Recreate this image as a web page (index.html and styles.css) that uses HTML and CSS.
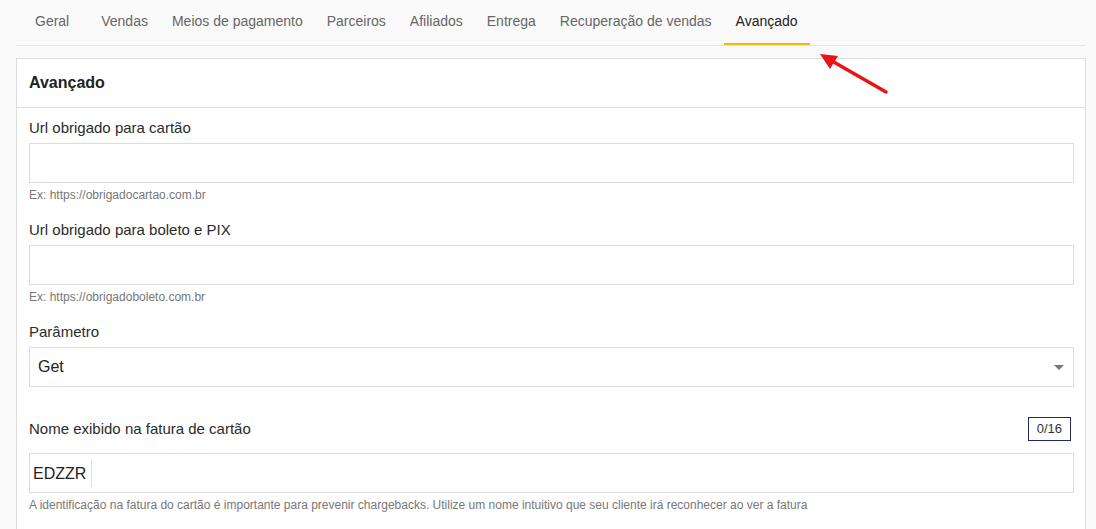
FILE: index.html
```html
<!DOCTYPE html>
<html lang="pt-BR">
<head>
<meta charset="UTF-8" />
<title>Configurações do produto - Avançado</title>
<link rel="stylesheet" href="styles.css">
</head>
<body>
  <div class="page">
    <nav class="tabs">
      <a class="tab first">Geral</a>
      <a class="tab">Vendas</a>
      <a class="tab">Meios de pagamento</a>
      <a class="tab">Parceiros</a>
      <a class="tab">Afiliados</a>
      <a class="tab">Entrega</a>
      <a class="tab">Recuperação de vendas</a>
      <a class="tab active">Avançado</a>
    </nav>

    <section class="card">
      <h2 class="card-title">Avançado</h2>

      <div class="card-body">
        <div class="field">
          <label class="label">Url obrigado para cartão</label>
          <div class="input"></div>
          <p class="hint">Ex: https://obrigadocartao.com.br</p>
        </div>

        <div class="field">
          <label class="label">Url obrigado para boleto e PIX</label>
          <div class="input"></div>
          <p class="hint">Ex: https://obrigadoboleto.com.br</p>
        </div>

        <div class="field">
          <label class="label">Parâmetro</label>
          <div class="input select">
            <span>Get</span>
            <span class="caret"></span>
          </div>
        </div>

        <div class="field field-name">
          <div class="label-row">
            <label class="label">Nome exibido na fatura de cartão</label>
            <span class="counter">0/16</span>
          </div>
          <div class="input prefixed">
            <span class="prefix">EDZZR</span>
          </div>
          <p class="hint">A identificação na fatura do cartão é importante para prevenir chargebacks. Utilize um nome intuitivo que seu cliente irá reconhecer ao ver a fatura</p>
        </div>
      </div>
    </section>
  </div>

  <!-- annotation arrow pointing at the active tab -->
  <svg class="arrow" width="80" height="52" viewBox="0 0 80 52">
    <line x1="68" y1="44" x2="14" y2="13" stroke="#e8141a" stroke-width="3.5" stroke-linecap="round" />
    <polygon points="2,6 20,8 12,21" fill="#e8141a" />
  </svg>
</body>
</html>
```

FILE: styles.css
```css
* {
  box-sizing: border-box;
}
html, body {
  margin: 0;
  padding: 0;
  background: #fafafa;
  font-family: "Liberation Sans", Arial, sans-serif;
  color: #333;
}

.page {
  padding: 0 10px 0 16px;
}

/* Tabs */
.tabs {
  display: flex;
  height: 46px;
  padding-left: 7px;
  border-bottom: 1px solid #e8e8e8;
}
.tab {
  padding: 13px 12px 0;
  font-size: 14px;
  line-height: 17px;
  color: #666;
  border-bottom: 2px solid transparent;
  cursor: pointer;
}
.tab.first {
  margin-right: 8px;
}
.tab.active {
  color: #222;
  border-bottom-color: #f5b800;
}

/* Card */
.card {
  margin-top: 12px;
  background: #fff;
  border: 1px solid #ddd;
  border-bottom: none;
  height: 480px;
}
.card-title {
  margin: 0;
  padding: 15px 12px 0;
  height: 49px;
  font-size: 16px;
  font-weight: 700;
  color: #222;
  border-bottom: 1px solid #ddd;
}
.card-body {
  padding: 10px 11px 0 12px;
}

/* Form fields */
.field {
  margin-bottom: 17px;
}
.label {
  display: block;
  font-size: 15px;
  line-height: 20px;
  color: #2b2b2b;
  margin-bottom: 5px;
}
.input {
  height: 40px;
  border: 1px solid #dcdcdc;
  background: #fff;
  display: flex;
  align-items: center;
  font-size: 16px;
  color: #222;
}
.hint {
  margin: 4px 0 0;
  font-size: 12px;
  line-height: 16px;
  color: #777;
}

.select {
  padding: 0 8px;
  justify-content: space-between;
  margin-top: 4px;
}
.caret {
  width: 0;
  height: 0;
  border-left: 5px solid transparent;
  border-right: 5px solid transparent;
  border-top: 5px solid #777;
  margin-right: 1px;
}

.field-name {
  margin-top: 30px;
}
.label-row {
  display: flex;
  justify-content: space-between;
  align-items: center;
  height: 24px;
  margin-bottom: 12px;
}
.label-row .label {
  margin: 0;
}
.counter {
  margin-right: 3px;
  padding: 0 8px;
  height: 24px;
  line-height: 22px;
  border: 1px solid #1b2a63;
  font-size: 13px;
  color: #333;
}
.prefix {
  padding: 0 5px 0 3px;
  height: 27px;
  line-height: 27px;
  border-right: 1px solid #ddd;
}

/* Annotation */
.arrow {
  position: absolute;
  left: 818px;
  top: 48px;
}
```
